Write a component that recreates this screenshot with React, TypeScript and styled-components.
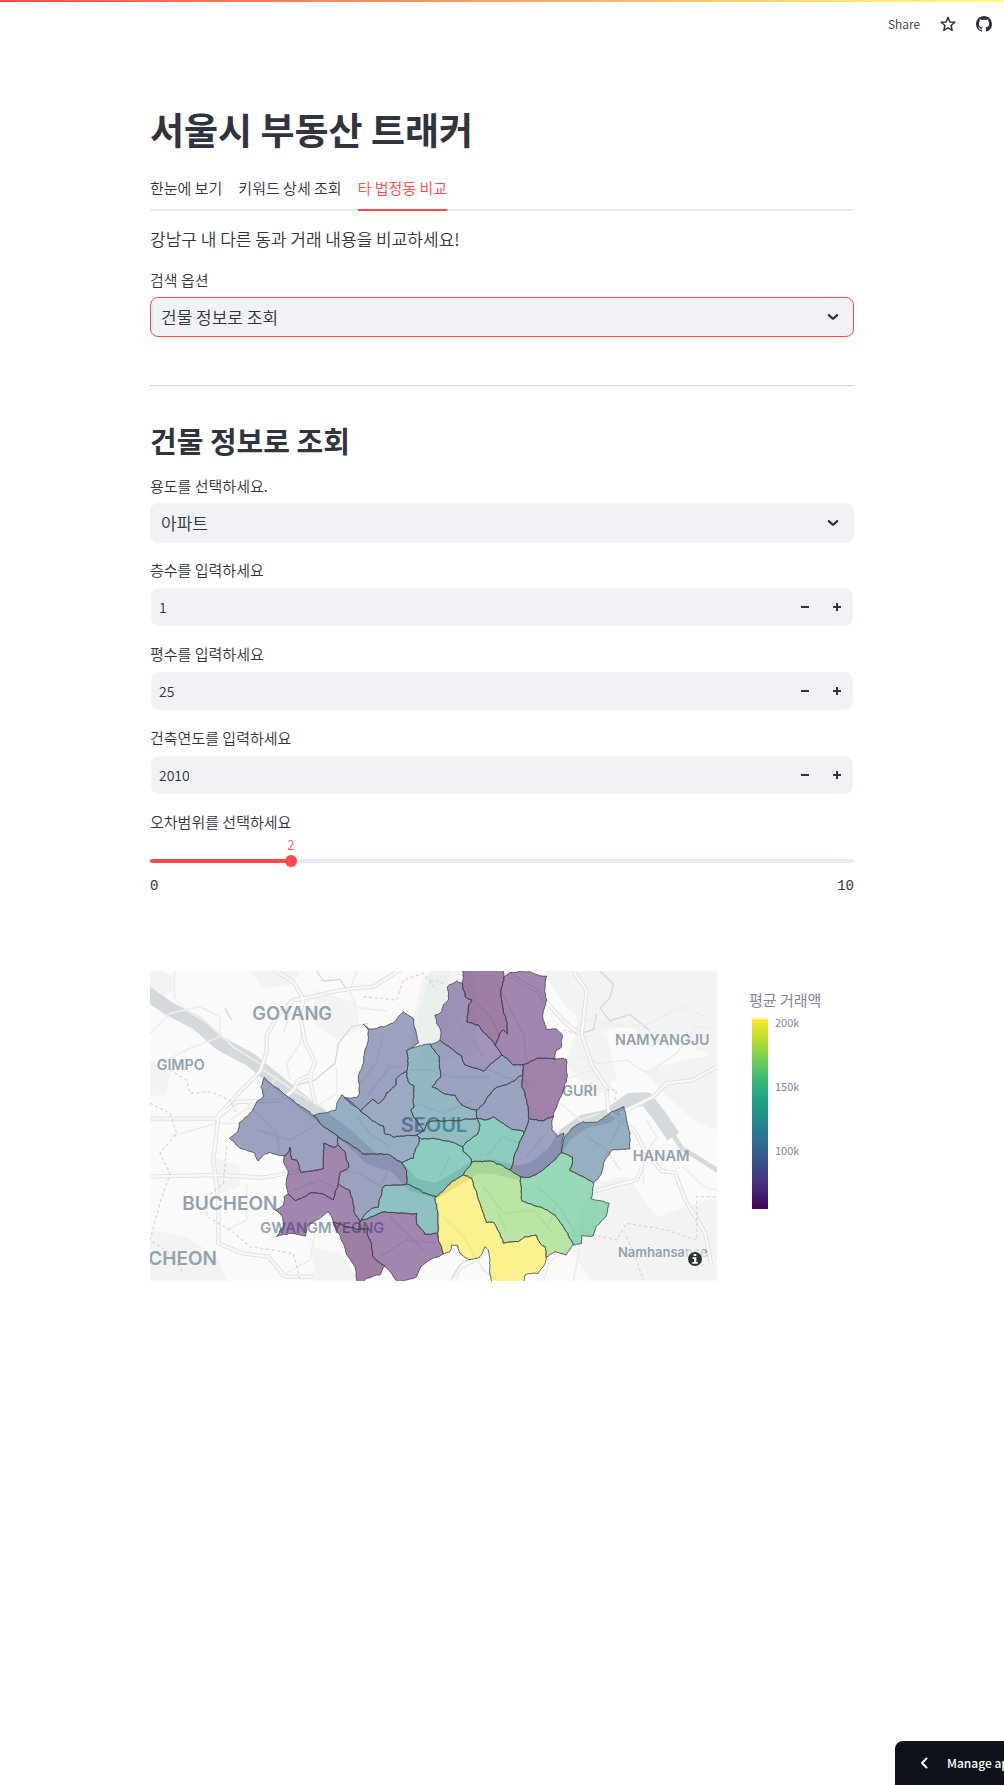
import React, { useState } from "react";
import styled, { createGlobalStyle } from "styled-components";

const Global = createGlobalStyle`
  *, *::before, *::after { box-sizing: border-box; }
  body {
    margin: 0;
    background: #fff;
    color: #31333f;
    font-family: "Noto Sans CJK KR", "Noto Sans", sans-serif;
    font-size: 17px;
    font-weight: 350;
    line-height: 24px;
  }
  button, input, select { font: inherit; color: inherit; }
`;

const Page = styled.div`
  min-height: 100vh;
  overflow-x: hidden;
`;

const Decoration = styled.div`
  height: 2px;
  background: linear-gradient(90deg, #ff4b4b, #fffd80);
`;

const Toolbar = styled.header`
  display: flex;
  justify-content: flex-end;
  align-items: center;
  height: 44px;
  gap: 20px;
  padding-right: 12px;
`;

const ToolButton = styled.button`
  display: flex;
  align-items: center;
  padding: 0;
  border: 0;
  background: none;
  font-size: 12px;
  line-height: 16px;
  cursor: pointer;
`;

const Main = styled.main`
  max-width: 736px;
  margin: 0 auto;
  padding: 61px 16px 96px;
`;

const Title = styled.h1`
  margin: 0 0 20px;
  font-size: 37px;
  line-height: 44px;
  font-weight: 700;
`;

const Tabs = styled.div`
  display: flex;
  gap: 16px;
  margin-bottom: 16px;
  box-shadow: inset 0 -2px #e9e9eb;
`;

const Tab = styled.button<{ $active?: boolean }>`
  height: 40px;
  padding: 0 0 4px;
  border: 0;
  border-bottom: 2px solid ${(p) => (p.$active ? "#ff4b4b" : "transparent")};
  background: none;
  color: ${(p) => (p.$active ? "#ff4b4b" : "inherit")};
  font-size: 15px;
  line-height: 20px;
  cursor: pointer;
`;

const Lead = styled.p`
  margin: 0 0 17px;
`;

const Field = styled.div`
  display: flex;
  flex-direction: column;
  gap: 5px;
`;

const Label = styled.label`
  font-size: 15px;
  line-height: 24px;
`;

const SelectBox = styled.div<{ $focused?: boolean }>`
  display: grid;
  align-items: center;
  height: 40px;
  border: 1px solid ${(p) => (p.$focused ? "#ff4b4b" : "#f0f2f6")};
  border-radius: 8px;
  background: #f0f2f6;

  & > * { grid-area: 1 / 1; }
  svg { justify-self: end; margin-right: 10px; pointer-events: none; }
`;

const Select = styled.select`
  appearance: none;
  width: 100%;
  height: 38px;
  padding: 0 40px 0 10px;
  border: 0;
  border-radius: 8px;
  background: none;
  outline: none;
`;

const Rule = styled.hr`
  height: 1px;
  margin: 48px 0 36px;
  border: 0;
  background: #d6d6d9;
`;

const Heading = styled.h2`
  margin: 0 0 16px;
  font-size: 29px;
  line-height: 36px;
  font-weight: 700;
`;

const Form = styled.div`
  display: flex;
  flex-direction: column;
  gap: 15px;
`;

const NumberBox = styled.div`
  display: flex;
  height: 40px;
  border: 1px solid #fff;
  border-radius: 9px;
  background: #f0f2f6;
  background-clip: padding-box;
`;

const NumberInput = styled.input`
  flex: 1;
  min-width: 0;
  padding: 0 8px;
  border: 0;
  background: none;
  font-size: 14px;
  outline: none;
  appearance: textfield;
  &::-webkit-inner-spin-button { display: none; }
`;

const Step = styled.button`
  display: grid;
  place-items: center;
  width: 32px;
  padding: 0;
  border: 0;
  background: none;
  cursor: pointer;
`;

const SliderField = styled.div`
  display: flex;
  flex-direction: column;
`;

const SliderValue = styled.output`
  width: max-content;
  margin-top: 3px;
  transform: translateX(-50%);
  color: #ff4b4b;
  font-size: 13px;
  line-height: 16px;
`;

const SliderRow = styled.div`
  display: grid;
  align-items: center;
  height: 16px;
  & > * { grid-area: 1 / 1; }
`;

const Track = styled.div`
  height: 4px;
  border-radius: 2px;
  background: #e6eaf1;
  overflow: hidden;
`;

const TrackFill = styled.div`
  height: 100%;
  background: #ff4b4b;
`;

const Range = styled.input`
  appearance: none;
  height: 12px;
  margin: 0 -6px;
  background: none;
  &::-webkit-slider-thumb {
    appearance: none;
    width: 12px;
    height: 12px;
    border-radius: 50%;
    background: #ff4b4b;
  }
`;

const Ends = styled.div`
  display: flex;
  justify-content: space-between;
  margin-top: 9px;
  font-family: "Liberation Mono", monospace;
  font-size: 14px;
  line-height: 16px;
`;

const Chart = styled.section`
  display: flex;
  align-items: flex-start;
  gap: 32px;
  margin-top: 77px;
`;

const MapFrame = styled.div`
  flex: 1;
  min-width: 0;
  max-width: 567px;
  svg { display: block; width: 100%; height: auto; }
`;

const Legend = styled.div`
  display: flex;
  flex-direction: column;
  gap: 7px;
  padding-top: 17px;
  color: #808495;
  font-size: 15px;
  font-weight: 400;
`;

const Scale = styled.div`
  display: flex;
  gap: 7px;
  padding-left: 3px;
`;

const Ramp = styled.div`
  width: 16px;
  height: 190px;
  background: linear-gradient(
    to top,
    #440154, #482878 11%, #3e4989 22%, #31688e 33%, #26828e 44%,
    #1f9e89 56%, #35b779 67%, #6ece58 78%, #b5de2b 89%, #fde725
  );
`;

const Ticks = styled.div`
  display: flex;
  flex-direction: column;
  gap: 48px;
  margin-top: -5px;
  font-size: 11px;
  line-height: 16px;
`;

const ManageButton = styled.button`
  position: fixed;
  right: 0;
  bottom: 0;
  display: flex;
  align-items: center;
  gap: 15px;
  width: 109px;
  height: 44px;
  padding: 0 0 0 21px;
  border: 0;
  border-radius: 8px 0 0 0;
  background: #0e1117;
  color: #fff;
  font-size: 12px;
  font-weight: 500;
  white-space: nowrap;
  overflow: hidden;
  cursor: pointer;
  svg { flex: none; }
`;

const Chevron = () => (
  <svg width="20" height="20" viewBox="0 0 20 20" fill="none" aria-hidden="true">
    <path d="M5.800 8.100l3.600 3.300q.6.500 1.200 0l3.600-3.300" stroke="#31333f" strokeWidth="2.200" strokeLinecap="round" />
  </svg>
);

const StarIcon = () => (
  <svg width="16" height="16" viewBox="0 0 16 16" fill="none" aria-hidden="true">
    <path
      d="M8 1.4l1.9 4.5 4.9.4-3.7 3.2 1.1 4.8L8 11.8l-4.2 2.5 1.1-4.8L1.200 6.300l4.900-.4z"
      stroke="#31333f" strokeWidth="1.500" strokeLinejoin="round"
    />
  </svg>
);

const GithubIcon = () => (
  <svg width="16" height="16" viewBox="0 0 16 16" aria-hidden="true">
    <path
      fill="#31333f"
      d="M8 0C3.580 0 0 3.580 0 8c0 3.540 2.290 6.530 5.470 7.590.4.070.55-.17.55-.38 0-.19-.01-.82-.01-1.490-2.010.37-2.530-.49-2.690-.94-.09-.23-.48-.94-.82-1.130-.28-.15-.68-.52-.01-.53.63-.01 1.080.58 1.230.82.72 1.210 1.870.87 2.330.66.07-.52.28-.87.51-1.070-1.780-.2-3.640-.89-3.640-3.950 0-.87.31-1.590.82-2.150-.08-.2-.36-1.020.08-2.120 0 0 .67-.21 2.200.82.64-.18 1.320-.27 2-.27s1.360.09 2 .27c1.530-1.040 2.200-.82 2.200-.82.44 1.100.16 1.920.08 2.120.51.56.82 1.270.82 2.150 0 3.070-1.870 3.750-3.650 3.950.29.25.54.73.54 1.480 0 1.070-.01 1.930-.01 2.200 0 .21.15.46.55.38A8.010 8.010 0 0 0 16 8c0-4.420-3.580-8-8-8z"
    />
  </svg>
);

const MinusIcon = () => (
  <svg width="8" height="8" viewBox="0 0 8 8" aria-hidden="true">
    <path d="M0 3h8v2H0z" fill="#31333f" />
  </svg>
);

const PlusIcon = () => (
  <svg width="8" height="8" viewBox="0 0 8 8" aria-hidden="true">
    <path d="M3 0h2v3h3v2H5v3H3V5H0V3h3z" fill="#31333f" />
  </svg>
);

type Area = { fill: string; points: string };

const west: Area[] = [
  { fill: "#3f4788", points: "640,163 657,178 700,170 735,155 760,125 790,145 797,180 806,218 770,242 770,305 742,322 738,345 710,368 704,382 685,402 668,388 632,424 582,383 620,382 628,372 627,310 640,280 645,240 655,205 655,181" },
  { fill: "#375a8c", points: "632,424 668,388 685,402 704,382 710,368 738,345 742,322 770,305 778,340 792,348 792,412 782,420 822,482 800,495 733,502 703,490 700,468 660,445" },
  { fill: "#33638d", points: "490,437 557,421 560,400 575,374 632,424 660,445 700,468 703,490 733,502 800,495 808,502 805,525 795,545 790,565 755,578 712,553 638,552 600,522 565,500 520,470" },
  { fill: "#3f4788", points: "343,322 392,362 430,390 490,437 520,470 565,500 563,525 555,532 540,528 520,520 520,596 453,607 440,570 425,568 420,532 414,548 402,557 360,547 340,555 325,573 315,550 270,535 238,505 262,485 268,458 300,430 320,395 340,380 332,350" },
  { fill: "#471365", points: "402,557 414,548 420,532 425,568 440,570 453,607 520,596 520,520 540,528 555,532 563,525 585,545 597,590 570,608 565,640 558,660 550,690 520,672 486,668 437,692 415,672 408,640 415,605 402,580" },
  { fill: "#471365", points: "415,672 437,692 486,668 520,672 550,690 558,660 565,640 600,662 608,690 612,725 630,755 625,779 590,770 550,755 535,725 500,750 470,770 467,798 420,790 380,800 400,770 398,742 376,720 400,705 402,680" },
  { fill: "#3f4788", points: "565,500 600,522 638,552 712,553 755,578 770,605 770,642 702,648 690,685 685,712 665,715 630,755 612,725 608,690 600,662 565,640 570,608 597,590 585,545 563,525" },
  { fill: "#23888e", points: "702,648 770,642 800,655 820,668 860,680 855,685 862,720 862,790 825,793 802,765 800,730 770,730 705,725 655,745 630,755 665,715 685,712 690,685" },
  { fill: "#440154", points: "550,755 590,770 625,779 652,775 655,800 665,820 668,858 705,888 690,915 650,925 625,950 615,890 590,855 580,820 560,785" },
  { fill: "#471365", points: "625,779 630,755 655,745 705,725 770,730 800,730 802,765 825,793 862,790 865,810 880,852 840,870 812,890 800,920 740,935 720,905 705,888 668,858 665,820 655,800 652,775" },
  { fill: "#2a778e", points: "770,242 806,228 840,222 868,262 872,322 846,350 880,370 915,375 935,405 965,418 980,420 980,445 840,455 830,460 822,482 782,420 792,412 792,348 778,340 770,305" },
  { fill: "#26828e", points: "822,482 830,460 840,455 980,445 990,465 980,495 950,515 938,530 920,522 880,512 845,505 815,508 808,502 800,495" },
  { fill: "#1fa088", points: "815,508 845,505 880,512 920,522 938,530 940,545 963,565 965,576 940,615 905,635 878,665 860,680 820,668 800,655 770,642 770,605 755,578 790,565 795,545 805,525 808,502" },
];

const east: Area[] = [
  { fill: "#1fa088", points: "140,445 165,450 190,440 220,460 245,478 282,486 240,600 190,575 125,576 123,565 100,545 98,530 110,515 140,495 150,465" },
  { fill: "#404688", points: "297,445 340,452 370,440 365,480 382,500 402,490 395,548 345,595 300,622 272,620 240,600 282,486" },
  { fill: "#3e4c8a", points: "140,420 165,398 190,360 205,350 245,335 278,315 275,350 290,400 297,445 282,486 245,478 220,460 190,440 165,450 140,445" },
  { fill: "#3e4c8a", points: "0,222 30,210 95,258 105,285 160,303 215,255 250,285 280,283 278,315 245,335 205,350 190,360 165,398 140,420 125,418 95,405 75,375 40,370 6,350 32,322 28,262" },
  { fill: "#472f7d", points: "15,135 35,125 40,105 55,90 52,50 80,33 97,40 105,80 125,90 115,120 110,155 145,165 165,190 195,225 215,255 160,303 105,285 95,258 30,210 32,180 20,160" },
  { fill: "#440154", points: "97,-9 97,40 105,80 125,90 115,120 110,155 145,165 165,190 195,225 210,190 220,180 233,192 232,160 220,120 212,70 222,20 215,-9" },
  { fill: "#471365", points: "222,20 240,8 270,3 300,5 325,15 350,18 345,50 350,90 338,140 350,178 380,178 397,195 395,230 380,240 375,268 320,265 280,283 250,285 215,255 195,225 210,190 220,180 233,192 232,160 220,120 212,70" },
  { fill: "#46085c", points: "280,283 320,265 375,268 408,267 412,320 402,355 385,395 370,440 340,452 297,445 290,400 275,350 278,315" },
  { fill: "#33638d", points: "395,548 400,510 425,475 460,455 505,455 545,425 582,410 590,450 600,505 600,537 545,540 520,580 515,610 490,640 418,600 428,562" },
  { fill: "#35b779", points: "272,620 300,622 345,595 395,548 428,562 418,600 490,640 482,685 510,692 538,700 530,735 498,770 490,797 455,797 455,820 430,825 405,780 375,735 340,715 275,692" },
  { fill: "#7ad151", points: "100,615 125,576 190,575 240,600 272,620 275,692 340,715 375,735 405,780 430,825 408,855 375,845 348,862 345,830 330,820 318,795 285,800 265,815 220,820 210,790 192,758 170,758 150,700 125,625" },
  { fill: "#fde725", points: "100,615 125,625 150,700 170,758 192,758 210,790 220,820 265,815 285,800 318,795 330,820 345,830 348,862 340,890 325,910 285,915 280,945 185,945 175,840 165,830 150,860 115,868 90,850 82,825 65,825 60,845 40,852 25,810 22,720 15,685 38,665 65,635" },
];

type Pt = [number, number];

const noise = (x: number, y: number) => {
  const v = Math.sin(x * 12.9898 + y * 78.233) * 43758.5453;
  return v - Math.floor(v) - 0.5;
};

/* Breaks an edge into short uneven steps; the result is the same from either
   end, so neighbouring districts keep a common border. */
const roughen = (a: Pt, b: Pt): Pt[] => {
  const len = Math.hypot(b[0] - a[0], b[1] - a[1]);
  if (len < 8) return [a];
  const mx = (a[0] + b[0]) / 2;
  const my = (a[1] + b[1]) / 2;
  const k = Math.min(5, len * 0.2);
  const mid: Pt = [mx + noise(mx, my) * k, my + noise(my, mx) * k];
  return [...roughen(a, mid), ...roughen(mid, b)];
};

const outline = (points: string, shift: number) => {
  const pts = points.split(" ").map((p) => {
    const [x, y] = p.split(",").map(Number);
    return [x + shift, y] as Pt;
  });
  const out = pts.flatMap((p, i) => roughen(p, pts[(i + 1) % pts.length]));
  return "M" + out.map(([x, y]) => x.toFixed(1) + " " + y.toFixed(1)).join("L") + "Z";
};

const Districts = ({ areas, shift }: { areas: Area[]; shift: number }) => (
  <g stroke="#444" strokeWidth="3" strokeLinejoin="round" strokeOpacity=".8" fillOpacity=".5">
    {areas.map((a) => (
      <path key={a.points} d={outline(a.points, shift)} fill={a.fill} />
    ))}
  </g>
);

const parks = [
  "M0 3h40l30 20 0 40-40 20-30-30z",
  "M300 3h150l-20 40-90 10z",
  "M780 180l40-160 60-17h100v250l-150 30z",
  "M1180 3h521v260l-140-60-60 30-60-70-110 30-90-90z",
  "M1290 130l80 70 30 120-60 60-90-90z",
  "M1480 300l221-50v230l-70-30-90-80z",
  "M1330 640l100-20 90 120 181-60v253h-380l-70-120z",
  "M0 780l110 20 90 60 30 73H0z",
  "M190 560l80 30 0 60-60 20z",
  "M480 830l90 20 60 83H500z",
  "M0 270l60 40-10 60-50 10z",
  "M500 60l120 40 10 80-70 30-80-60z",
];

const majorRoads = [
  "M0 446h200l60-50 130-5 40-30 15-30 35-15 15-40-30-60-15-80 10-50-30-50-70-45",
  "M200 440l70-75 60-60 20-60 0-50 35-60 45-45 60-10 60-15 60-10 60-5 80-50 30-25",
  "M0 620l200-5 140 8 110-20",
  "M205 440l-15 130 15 120 0 130 70 30 80 10 50 60h90",
  "M495 400l-15-70 5-20",
  "M1270 3l40 60-15 130 30 90 45 70 5 70 80 60 30 60 50 60 40 5 30 80 60 100 20 100",
  "M1410 430l100-50 40-40 80-10 71-40",
  "M1330 665l70-20 60-15 15-35",
  "M1060 3l100 60 80 90 50 40",
];

const minorRoads = [
  "M73 3v80l40 40 50 30 90 80 80 50",
  "M0 190l60-60 90-20 60 30 0 60-80 30-120 60",
  "M400 190l20-60 40 10 -10 80-40 60 10 50",
  "M290 640v110l-60 30 M60 500l140-40 90 0",
  "M620 3l-20 60 20 50 90 10 M560 290l0 80-60 40",
  "M1280 260l70 20 80-10 60 40 90-60 60-80 61 10",
  "M1260 190l50-40 120 20 70-10 90-50 80 30",
  "M1490 450l30 50-40 60 0 80 M1600 590l60 60 41 10",
  "M1270 933l30-150-10-60 M1180 933l20-60 60-40",
  "M900 933l40-40 60-30 M940 870l-20 60",
  "M500 760l-20 110-90 50",
  "M1240 330l90-30 60 60 M1230 400l60 50 60-20",
  "M340 300l90 60 100 60 M380 320l-50 70-90 60",
];

const innerRoads = [
  "M290 400l90 90 10 60 M320 480l100 30 70-40",
  "M650 380l70-90 40 0 M700 190l-20 90-50 60",
  "M620 440l40 50 60 40 M570 600l60 10 60 40 30-60",
  "M430 660l80-30 40 20 M690 860l80-50 90 10",
  "M720 740l60 60 40 40 M780 300l60 0 60 20 120 0",
  "M800 400l80 30 90-40 M1000 290l60 30 80 20 M1040 40l80 150 10 90",
  "M1010 560l50-60 50 20 M900 560l-30 60",
  "M1000 650l60 80 90-10 60 70 M1040 720l30 60",
  "M1160 650l70 60 50 90 M1220 700l-30 80 M880 740l60 60 60 100 40 30",
  "M1130 560l50-60 M1310 500l60 40 40 60 M1420 440l-40 80",
  "M960 80l60 60 30 60 M900 120l60 80 40 60",
];

const boundaries = [
  "M60 300l50 30 10 40 60-5 60 25 20 40",
  "M0 400l60 30 20 60-50 60 30 60-30 90-30 110 60 40 40 60",
  "M230 530l-10 110-50 40 0 60 70 40 60 50 130 20 20 80",
  "M640 80l100 10 20-60 60-20 40 50",
  "M840 30l40 10 M1240 180l40 10",
  "M1370 360l30 0-10 50-20 10",
  "M1310 790l90 20 30-50 120 20 90 30 0-130 61 0",
  "M1430 800l30 70 20 60",
];

const SeoulMap = () => (
  <svg viewBox="0 3 1701 930" role="img" aria-label="서울시 구별 평균 거래액">
    <defs>
      <clipPath id="frame"><rect x="0" y="3" width="1701" height="930" /></clipPath>
    </defs>
    <g clipPath="url(#frame)">
      <rect y="3" width="1701" height="930" fill="#fafaf8" />
      <g fill="#f1f4f1">{parks.map((d) => <path key={d} d={d} />)}</g>
      <path d="M780 230l60-227 60 0-10 220z" fill="#eaf0ec" />
      <g fill="none" stroke="#d4dadc" strokeLinejoin="round">
        <path d="M-20 62L60 118L140 158L210 220L300 268L400 350L490 420L600 505L660 562L740 590L790 645L860 662L930 620L980 590L1030 590L1100 608L1150 598L1210 550L1245 495L1300 455L1370 440L1440 390L1490 388L1530 440L1570 500" strokeWidth="42" />
        <path d="M1560 480l35 55 50 30 70 45" strokeWidth="14" />
        <path d="M655 160l-50 10-40 50-10 60-60 50-70 20M500 3l20 30 50-5 20 30M1350 3l40 40-10 40-30 30 30 40 60-20 60 50M1290 190l40-10 10-50M225 115l20 35M900 933l30-50 40-20" strokeWidth="4" />
      </g>
      <g fill="none" stroke="#ededeb" strokeWidth="5" strokeLinejoin="round">
        {minorRoads.map((d) => <path key={d} d={d} />)}
      </g>
      <g fill="none" stroke="#e2e2e0" strokeWidth="13" strokeLinejoin="round">
        {majorRoads.map((d) => <path key={d} d={d} />)}
      </g>
      <g fill="none" stroke="#f8f8f6" strokeWidth="7" strokeLinejoin="round">
        {majorRoads.map((d) => <path key={d} d={d} />)}
      </g>
      <g fill="none" stroke="#ebebe9" strokeWidth="6" strokeLinejoin="round">
        {innerRoads.map((d) => <path key={d} d={d} />)}
      </g>
      <g fill="none" stroke="#f0cdd2" strokeWidth="4" strokeDasharray="9 8">
        {boundaries.map((d) => <path key={d} d={d} />)}
      </g>
      <g fill="#93a2af" fontFamily="Inter, sans-serif" fontWeight="600">
        <text x="307" y="150" fontSize="55">GOYANG</text>
        <text x="20" y="300" fontSize="43">GIMPO</text>
        <text x="97" y="720" fontSize="57">BUCHEON</text>
        <text x="-5" y="884" fontSize="57">CHEON</text>
        <text x="331" y="788" fontSize="44">GWANGMYEONG</text>
        <text x="752" y="485" fontSize="60" fill="#728c9e">SEOUL</text>
        <text x="1395" y="226" fontSize="43">NAMYANGJU</text>
        <text x="1237" y="378" fontSize="43">GURI</text>
        <text x="1448" y="574" fontSize="44">HANAM</text>
        <text x="1404" y="860" fontSize="39">Namhansanse</text>
      </g>
      <Districts areas={west} shift={0} />
      <Districts areas={east} shift={840} />
      <circle cx="1635" cy="867" r="36" fill="#f4f6f4" fillOpacity=".6" />
      <circle cx="1635" cy="867" r="21" fill="#333" />
      <path d="M1631 852h8v6h-8zM1628 862h11v14h4v5h-16v-5h5v-9h-4z" fill="#fff" />
    </g>
  </svg>
);

function NumberField({ id, label, initial }: { id: string; label: string; initial: number }) {
  const [value, setValue] = useState(initial);
  return (
    <Field>
      <Label htmlFor={id}>{label}</Label>
      <NumberBox>
        <NumberInput id={id} type="number" value={value} onChange={(e) => setValue(Number(e.target.value))} />
        <Step type="button" aria-label="감소" onClick={() => setValue(value - 1)}><MinusIcon /></Step>
        <Step type="button" aria-label="증가" onClick={() => setValue(value + 1)}><PlusIcon /></Step>
      </NumberBox>
    </Field>
  );
}

function ToleranceSlider() {
  const [value, setValue] = useState(2);
  const percent = `${value * 10}%`;
  return (
    <SliderField>
      <Label htmlFor="tolerance">오차범위를 선택하세요</Label>
      <SliderValue htmlFor="tolerance" style={{ marginLeft: percent }}>{value}</SliderValue>
      <SliderRow>
        <Track><TrackFill style={{ width: percent }} /></Track>
        <Range id="tolerance" type="range" min={0} max={10} value={value} onChange={(e) => setValue(Number(e.target.value))} />
      </SliderRow>
      <Ends><span>0</span><span>10</span></Ends>
    </SliderField>
  );
}

export default function App() {
  return (
    <Page>
      <Global />
      <Decoration />
      <Toolbar>
        <ToolButton type="button">Share</ToolButton>
        <ToolButton type="button" aria-label="즐겨찾기"><StarIcon /></ToolButton>
        <ToolButton type="button" aria-label="GitHub"><GithubIcon /></ToolButton>
      </Toolbar>
      <Main>
        <Title>서울시 부동산 트래커</Title>
        <Tabs role="tablist">
          <Tab type="button" role="tab">한눈에 보기</Tab>
          <Tab type="button" role="tab">키워드 상세 조회</Tab>
          <Tab type="button" role="tab" aria-selected="true" $active>타 법정동 비교</Tab>
        </Tabs>
        <Lead>강남구 내 다른 동과 거래 내용을 비교하세요!</Lead>
        <Field>
          <Label htmlFor="mode">검색 옵션</Label>
          <SelectBox $focused>
            <Select id="mode"><option>건물 정보로 조회</option></Select>
            <Chevron />
          </SelectBox>
        </Field>
        <Rule />
        <Heading>건물 정보로 조회</Heading>
        <Form>
          <Field>
            <Label htmlFor="usage">용도를 선택하세요.</Label>
            <SelectBox>
              <Select id="usage"><option>아파트</option></Select>
              <Chevron />
            </SelectBox>
          </Field>
          <NumberField id="floor" label="층수를 입력하세요" initial={1} />
          <NumberField id="size" label="평수를 입력하세요" initial={25} />
          <NumberField id="year" label="건축연도를 입력하세요" initial={2010} />
          <ToleranceSlider />
        </Form>
        <Chart>
          <MapFrame><SeoulMap /></MapFrame>
          <Legend>
            <span>평균 거래액</span>
            <Scale>
              <Ramp />
              <Ticks><span>200k</span><span>150k</span><span>100k</span></Ticks>
            </Scale>
          </Legend>
        </Chart>
      </Main>
      <ManageButton type="button">
        <svg width="16" height="16" viewBox="0 0 16 16" fill="none" aria-hidden="true">
          <path d="M10.500 3.500L6 8l4.500 4.500" stroke="#fff" strokeWidth="2" strokeLinecap="round" strokeLinejoin="round" />
        </svg>
        Manage app
      </ManageButton>
    </Page>
  );
}
